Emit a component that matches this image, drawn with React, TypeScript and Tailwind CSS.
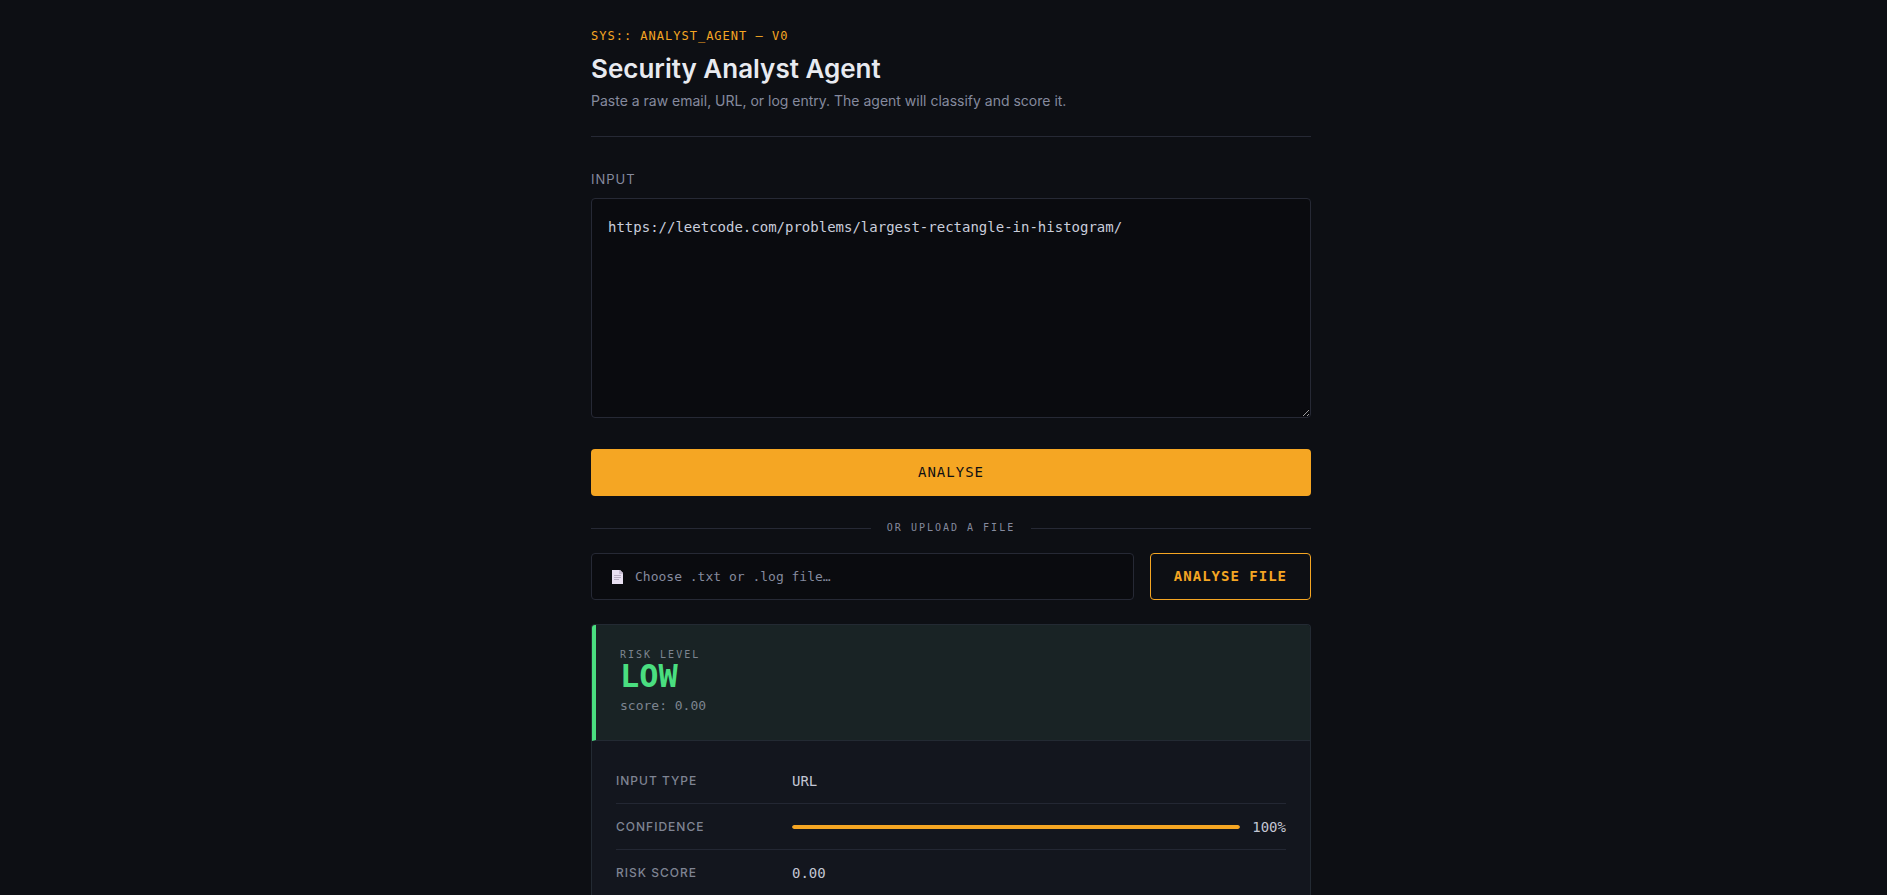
import { useState, type ReactNode } from "react";

const mono = "font-['DejaVu_Sans_Mono','Liberation_Mono',monospace]";

function FileIcon() {
  return (
    <svg width="11" height="14" viewBox="0 0 11 14" aria-hidden="true" className="shrink-0">
      <path d="M0 0h8l3 3v11H0z" fill="#e9e0f2" />
      <path d="M7 0h1l3 3v1H7z" fill="#c9bfd4" />
      <path d="M2 5.5h7M2 7.5h7M2 9.5h5" stroke="#b8aec4" strokeWidth="1" />
    </svg>
  );
}

function Row({ label, children, last = false }: { label: string; children: ReactNode; last?: boolean }) {
  return (
    <div className={`flex h-[46px] items-center ${last ? "" : "border-b border-[#232733]"}`}>
      <dt className="w-44 shrink-0 text-[12px] font-medium uppercase leading-4 tracking-[1px] text-[#7f8493]">{label}</dt>
      <dd className={`flex min-w-0 flex-1 items-center text-[14px] leading-5 text-[#c3c6d4] ${mono}`}>{children}</dd>
    </div>
  );
}

export default function App() {
  const [text, setText] = useState("https://leetcode.com/problems/largest-rectangle-in-histogram/");
  const confidence = 100;

  return (
    <div className="h-screen overflow-hidden bg-[#0d0f14] pl-[15px] font-['Inter',sans-serif] text-[#e8eaf0]">
      <main className="mx-auto flex min-h-full max-w-[720px] flex-col pt-7">
        <header className="border-b border-[#262935] pb-[25px]">
          <p className={`text-[12px] leading-4 tracking-[1px] text-[#f5a623] ${mono}`}>SYS:: ANALYST_AGENT — V0</p>
          <h1 className="mt-[9px] text-[26px] font-semibold leading-8">Security Analyst Agent</h1>
          <p className="mt-1.5 text-[14px] leading-5 text-[#858a9e]">
            Paste a raw email, URL, or log entry. The agent will classify and score it.
          </p>
        </header>

        <form className="flex flex-col" onSubmit={(e) => e.preventDefault()}>
          <label htmlFor="entry" className="mt-8 text-[13px] leading-5 tracking-[1px] text-[#858a9e]">
            INPUT
          </label>
          <textarea
            id="entry"
            value={text}
            onChange={(e) => setText(e.target.value)}
            spellCheck={false}
            className={`mt-[9px] h-[220px] w-full resize-y rounded-[4px] border border-[#262935] bg-[#0a0b0f] p-4 text-[14px] leading-6 text-[#c9cddb] outline-none ${mono}`}
          />
          <button
            type="submit"
            className={`mt-[31px] h-[47px] rounded-[4px] bg-[#f5a623] text-[14px] tracking-[1px] text-[#0d0f14] ${mono}`}
          >
            ANALYSE
          </button>
        </form>

        <div className={`mt-6 flex items-center gap-4 text-[10px] leading-4 tracking-[2px] text-[#858a9e] ${mono}`}>
          <span className="h-px flex-1 bg-[#262935]" />
          OR UPLOAD A FILE
          <span className="h-px flex-1 bg-[#262935]" />
        </div>

        <form className="mt-[17px] flex gap-4" onSubmit={(e) => e.preventDefault()}>
          <label
            className={`flex h-[47px] flex-1 cursor-pointer items-center gap-3 rounded-[4px] border border-[#262935] bg-[#0a0b0f] px-5 text-[13px] text-[#858a9e] ${mono}`}
          >
            <input type="file" accept=".txt,.log" className="sr-only" />
            <FileIcon />
            Choose .txt or .log file…
          </label>
          <button
            type="submit"
            className={`h-[47px] rounded-[4px] border border-[#f5a623] px-[23px] text-[14px] font-bold tracking-[1px] text-[#f5a623] ${mono}`}
          >
            ANALYSE FILE
          </button>
        </form>

        <section className="mt-6 flex-1 overflow-hidden rounded-t-[4px] border border-b-0 border-[#232a33] bg-[#13161e]">
          <div className={`border-b border-l-4 border-b-[#232a33] border-l-[#4ade80] bg-[#192325] px-6 pb-6 pt-[23px] ${mono}`}>
            <p className="text-[10px] leading-[14px] tracking-[2px] text-[#7d8590]">RISK LEVEL</p>
            <p className="text-[32px] font-bold leading-7 text-[#4ade80]">LOW</p>
            <p className="mt-1.5 text-[13px] leading-5 text-[#7d8590]">score: 0.00</p>
          </div>
          <dl className="px-6 pt-[17px]">
            <Row label="Input type">URL</Row>
            <Row label="Confidence">
              <span className="mr-3 h-1 flex-1 overflow-hidden rounded-full bg-[#262935]">
                <span className="block h-full rounded-full bg-[#f5a623]" style={{ width: `${confidence}%` }} />
              </span>
              {confidence}%
            </Row>
            <Row label="Risk score" last>0.00</Row>
          </dl>
        </section>
      </main>
    </div>
  );
}
